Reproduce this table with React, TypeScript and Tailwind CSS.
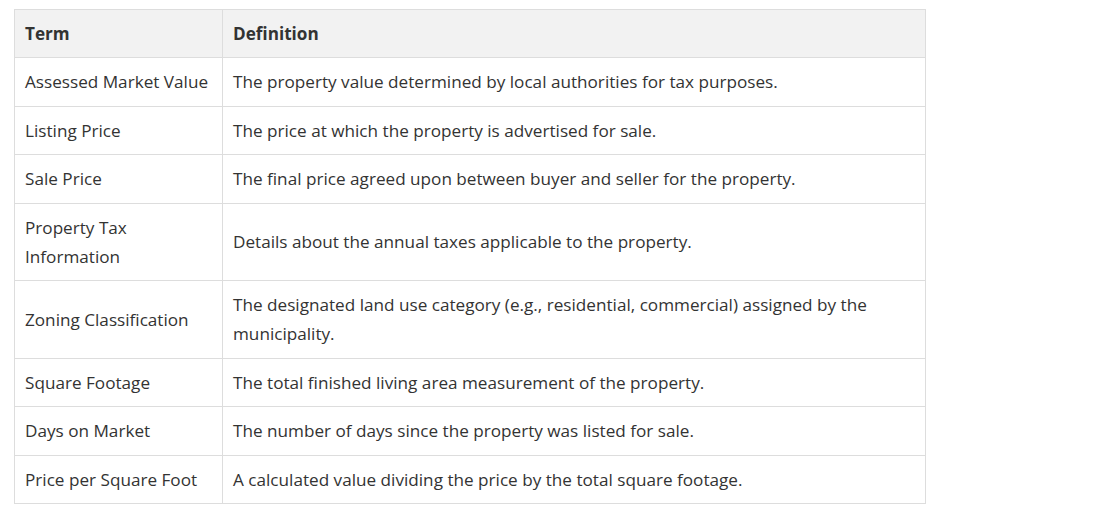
import React from "react";

const rows: [string, string][] = [
  ["Assessed Market Value", "The property value determined by local authorities for tax purposes."],
  ["Listing Price", "The price at which the property is advertised for sale."],
  ["Sale Price", "The final price agreed upon between buyer and seller for the property."],
  ["Property Tax Information", "Details about the annual taxes applicable to the property."],
  ["Zoning Classification", "The designated land use category (e.g., residential, commercial) assigned by the municipality."],
  ["Square Footage", "The total finished living area measurement of the property."],
  ["Days on Market", "The number of days since the property was listed for sale."],
  ["Price per Square Foot", "A calculated value dividing the price by the total square footage."],
];

export default function App() {
  return (
    <div
      className="bg-white w-[1112px] h-[512px] pt-[9px] pl-[14px] text-[#333333] text-[17.15px]"
      style={{ fontFamily: "'Segoe UI', 'Open Sans', 'Noto Sans', sans-serif" }}
    >
      <table className="border-collapse w-[912px] table-fixed">
        <colgroup>
          <col className="w-[208px]" />
          <col />
        </colgroup>
        <thead>
          <tr className="bg-[#f2f2f2]">
            <th className="border border-[#dddddd] text-left font-bold px-[10px] py-[9px] leading-[29px]">Term</th>
            <th className="border border-[#dddddd] text-left font-bold px-[10px] py-[9px] leading-[29px]">Definition</th>
          </tr>
        </thead>
        <tbody>
          {rows.map(([t, d]) => (
            <tr key={t}>
              <td className="border border-[#dddddd] px-[10px] py-[9.25px] leading-[29px] align-middle">{t}</td>
              <td className="border border-[#dddddd] px-[10px] py-[9.25px] leading-[29px] align-middle">{d}</td>
            </tr>
          ))}
        </tbody>
      </table>
    </div>
  );
}
